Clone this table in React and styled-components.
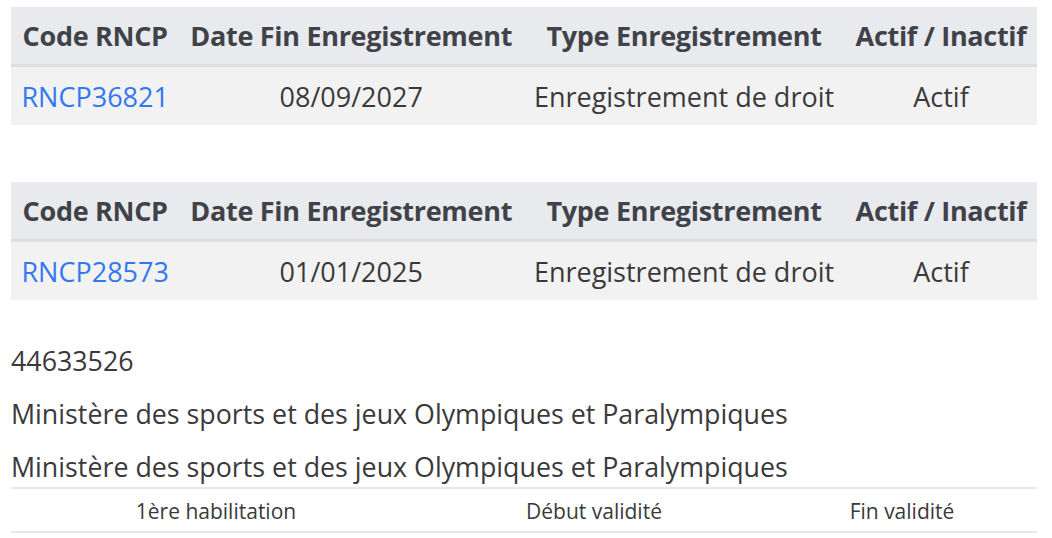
import React from 'react';
import styled, { createGlobalStyle } from 'styled-components';

const GlobalStyle = createGlobalStyle`
  body {
    margin: 0;
    background: #ffffff;
    font-family: "Open Sans", "Liberation Sans", sans-serif;
    color: #3a3a3a;
  }
`;

const Page = styled.div`
  padding: 7px 15px 0 11px;
`;

const Table = styled.table`
  width: 100%;
  border-collapse: collapse;
  margin-bottom: ${(props) => props.gap || 0}px;
`;

const HeadCell = styled.th`
  background: #e9eaee;
  color: #3f4349;
  font-weight: 700;
  font-size: 27px;
  letter-spacing: -0.3px;
  height: 57px;
  padding: 0 10px;
  white-space: nowrap;
  border-bottom: 3px solid #dcdee3;
  text-align: center;
`;

const Cell = styled.td`
  background: #f2f2f2;
  font-size: 27px;
  height: 58px;
  padding: 0 10px;
  text-align: center;
  white-space: nowrap;
`;

const Link = styled.a`
  color: #3478f0;
  text-decoration: none;
`;

const Lines = styled.div`
  display: flex;
  flex-direction: column;
  gap: 13px;
  margin-top: 41px;
`;

const Line = styled.div`
  font-size: 26.8px;
  line-height: 40px;
  color: #3a3a3a;
`;

const SmallTable = styled.table`
  width: 100%;
  border-collapse: collapse;
  table-layout: fixed;
  border-top: 2px solid #e6e8ed;
  border-bottom: 2px solid #e6e8ed;
`;

const SmallHead = styled.th`
  font-weight: 400;
  font-size: 21px;
  color: #3a3a3a;
  height: 40px;
  padding: 2px 0 0;
  text-align: center;
  width: ${(props) => props.w}px;
`;

const registrations = [
  { code: 'RNCP36821', end: '08/09/2027' },
  { code: 'RNCP28573', end: '01/01/2025' },
];

const Registration = ({ code, end, gap }) => (
  <Table gap={gap}>
    <thead>
      <tr>
        <HeadCell>Code RNCP</HeadCell>
        <HeadCell>Date Fin Enregistrement</HeadCell>
        <HeadCell>Type Enregistrement</HeadCell>
        <HeadCell>Actif / Inactif</HeadCell>
      </tr>
    </thead>
    <tbody>
      <tr>
        <Cell>
          <Link href="#">{code}</Link>
        </Cell>
        <Cell>{end}</Cell>
        <Cell>Enregistrement de droit</Cell>
        <Cell>Actif</Cell>
      </tr>
    </tbody>
  </Table>
);

export default function App() {
  return (
    <Page>
      <GlobalStyle />
      {registrations.map((r, i) => (
        <Registration key={r.code} code={r.code} end={r.end} gap={i === 0 ? 57 : 0} />
      ))}
      <Lines>
        <Line>44633526</Line>
        <Line>Ministère des sports et des jeux Olympiques et Paralympiques</Line>
        <Line>Ministère des sports et des jeux Olympiques et Paralympiques</Line>
      </Lines>
      <SmallTable>
        <thead>
          <tr>
            <SmallHead w={410}>1ère habilitation</SmallHead>
            <SmallHead w={346}>Début validité</SmallHead>
            <SmallHead w={270}>Fin validité</SmallHead>
          </tr>
        </thead>
      </SmallTable>
    </Page>
  );
}
